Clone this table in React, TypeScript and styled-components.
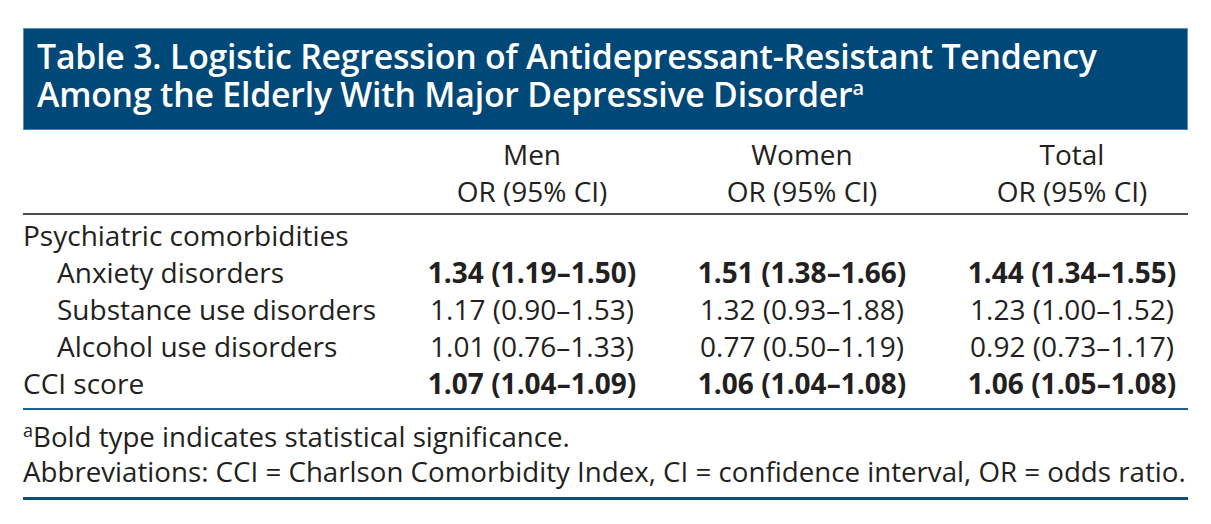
import React from "react";
import styled, { createGlobalStyle, css } from "styled-components";

const GlobalStyle = createGlobalStyle`
  html, body { margin: 0; padding: 0; background: #ffffff; }
  body { font-family: "Open Sans", "Noto Sans", sans-serif; color: #231f20; }
`;

const Page = styled.div`
  width: 1165px;
  padding: 28px 0 0 23px;
`;

const TitleBar = styled.div`
  box-sizing: border-box;
  height: 102px;
  background: #004877;
  border: 1px solid #5f93bb;
  border-bottom-color: #2b8ab8;
  padding: 8px 0 0 13px;
`;

const TitleText = styled.h1`
  margin: 0;
  color: #ffffff;
  font-family: "Open Sans", "Noto Sans", sans-serif;
  font-weight: 600;
  font-size: 33.8px;
  line-height: 38px;
  letter-spacing: -0.2px;
  white-space: nowrap;
`;

const Sup = styled.sup<{ $size: number; $raise: number }>`
  font-size: ${(p) => p.$size}px;
  line-height: 0;
  vertical-align: ${(p) => p.$raise}px;
  font-weight: inherit;
`;

const gridCols = css`
  display: grid;
  grid-template-columns: 1fr repeat(3, 232px);
  column-gap: 38px;
`;

const HeaderGrid = styled.div`
  ${gridCols};
  padding: 6px 0 3px;
  border-bottom: 2px solid #4d4d4d;
  font-size: 28px;
  line-height: 37px;
`;

const HeadCell = styled.div`
  text-align: center;
  display: flex;
  flex-direction: column;
`;

const BodyGrid = styled.div`
  ${gridCols};
  padding: 2px 0 6px;
  border-bottom: 2px solid #1d6193;
  font-size: 28px;
  line-height: 37px;
`;

const Label = styled.div<{ $indent?: boolean }>`
  padding-left: ${(p) => (p.$indent ? 34 : 0)}px;
  white-space: nowrap;
`;

const Value = styled.div<{ $bold?: boolean }>`
  text-align: center;
  white-space: nowrap;
  font-weight: ${(p) => (p.$bold ? 700 : 400)};
`;

const Notes = styled.div`
  padding: 9px 0 8px;
  border-bottom: 3px solid #0f4d7b;
  font-size: 27.7px;
  line-height: 35px;
`;

const Note = styled.p`
  margin: 0;
  white-space: nowrap;
`;

type Row = { label: string; indent?: boolean; bold?: boolean; values?: string[] };

const rows: Row[] = [
  { label: "Psychiatric comorbidities" },
  { label: "Anxiety disorders", indent: true, bold: true, values: ["1.34 (1.19–1.50)", "1.51 (1.38–1.66)", "1.44 (1.34–1.55)"] },
  { label: "Substance use disorders", indent: true, values: ["1.17 (0.90–1.53)", "1.32 (0.93–1.88)", "1.23 (1.00–1.52)"] },
  { label: "Alcohol use disorders", indent: true, values: ["1.01 (0.76–1.33)", "0.77 (0.50–1.19)", "0.92 (0.73–1.17)"] },
  { label: "CCI score", bold: true, values: ["1.07 (1.04–1.09)", "1.06 (1.04–1.08)", "1.06 (1.05–1.08)"] },
];

const groups = ["Men", "Women", "Total"];

export default function App() {
  return (
    <Page>
      <GlobalStyle />
      <TitleBar>
        <TitleText>
          Table 3. Logistic Regression of Antidepressant-Resistant Tendency
          <br />
          Among the Elderly With Major Depressive Disorder
          <Sup $size={20} $raise={12}>a</Sup>
        </TitleText>
      </TitleBar>
      <HeaderGrid>
        <div />
        {groups.map((g) => (
          <HeadCell key={g}>
            <span>{g}</span>
            <span>OR (95% CI)</span>
          </HeadCell>
        ))}
      </HeaderGrid>
      <BodyGrid>
        {rows.map((r) => (
          <React.Fragment key={r.label}>
            <Label $indent={r.indent}>{r.label}</Label>
            {(r.values ?? ["", "", ""]).map((v, i) => (
              <Value key={i} $bold={r.bold}>{v}</Value>
            ))}
          </React.Fragment>
        ))}
      </BodyGrid>
      <Notes>
        <Note>
          <Sup $size={18} $raise={10}>a</Sup>Bold type indicates statistical significance.
        </Note>
        <Note>
          Abbreviations: CCI = Charlson Comorbidity Index, CI = confidence interval, OR = odds ratio.
        </Note>
      </Notes>
    </Page>
  );
}
